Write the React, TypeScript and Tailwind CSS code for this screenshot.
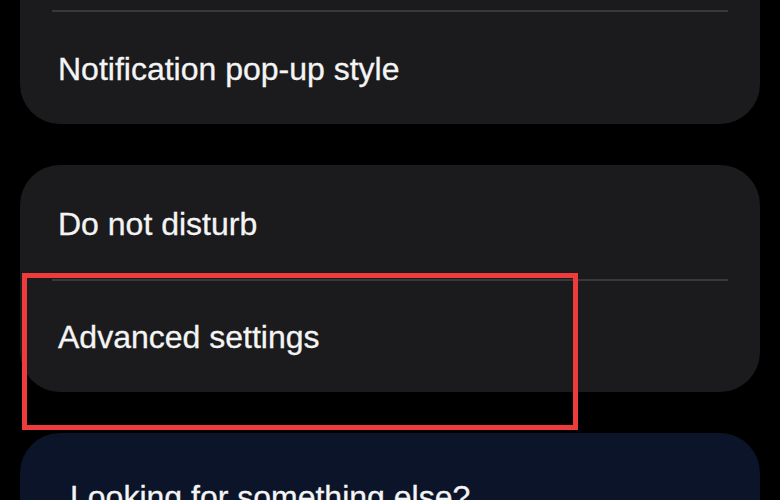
import React from 'react';

function Row({ label, className = '' }: { label: string; className?: string }) {
  return (
    <div className={`flex items-center px-[38px] ${className}`}>
      <span className="text-[32px] leading-none text-[#f4f4f4] [-webkit-text-stroke:0.3px_#f4f4f4]">{label}</span>
    </div>
  );
}

function Divider() {
  return <div className="mx-[32px] h-[2px] bg-[#38383b]" />;
}

export default function App() {
  return (
    <div
      className="relative h-[500px] w-[780px] overflow-hidden bg-black"
      style={{ fontFamily: '"Liberation Sans", Arial, sans-serif' }}
    >
      <div className="flex flex-col gap-[41px] px-[20px]">
        {/* top card, scrolled partly out of view */}
        <div className="rounded-b-[40px] bg-[#1b1b1d] pt-[10px]">
          <Divider />
          <Row label="Notification pop-up style" className="h-[112px] pt-[2px]" />
        </div>

        <div className="rounded-[40px] bg-[#1b1b1d]">
          <Row label="Do not disturb" className="h-[114px] pt-[4px]" />
          <Divider />
          <Row label="Advanced settings" className="h-[111px]" />
        </div>

        <div className="h-[120px] rounded-[40px] bg-[#0b1428] px-[50px] pt-[48px]">
          <span className="text-[32px] leading-none text-[#f4f4f4] [-webkit-text-stroke:0.3px_#f4f4f4]">
            Looking for something else?
          </span>
        </div>
      </div>

      {/* highlight box */}
      <div className="absolute left-[22px] top-[273px] h-[157px] w-[556px] border-[5px] border-[#ee3b3b]" />
    </div>
  );
}
